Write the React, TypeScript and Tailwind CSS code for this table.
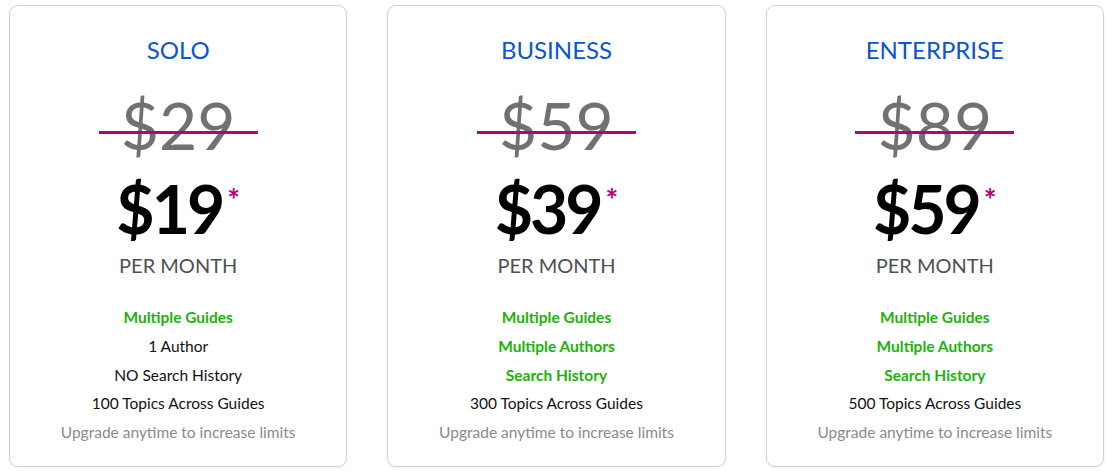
import React from "react";

type Plano = {
  nome: string;
  antigo: string;
  atual: string;
  itens: { texto: string; destaque: boolean }[];
};

const PLANOS: Plano[] = [
  {
    nome: "SOLO",
    antigo: "$29",
    atual: "$19",
    itens: [
      { texto: "Multiple Guides", destaque: true },
      { texto: "1 Author", destaque: false },
      { texto: "NO Search History", destaque: false },
      { texto: "100 Topics Across Guides", destaque: false },
    ],
  },
  {
    nome: "BUSINESS",
    antigo: "$59",
    atual: "$39",
    itens: [
      { texto: "Multiple Guides", destaque: true },
      { texto: "Multiple Authors", destaque: true },
      { texto: "Search History", destaque: true },
      { texto: "300 Topics Across Guides", destaque: false },
    ],
  },
  {
    nome: "ENTERPRISE",
    antigo: "$89",
    atual: "$59",
    itens: [
      { texto: "Multiple Guides", destaque: true },
      { texto: "Multiple Authors", destaque: true },
      { texto: "Search History", destaque: true },
      { texto: "500 Topics Across Guides", destaque: false },
    ],
  },
];

function CartaoPlano({ plano }: { plano: Plano }) {
  return (
    <div className="flex flex-col items-center rounded-[9px] border border-[#d2d2d2] bg-white pt-[28px] pb-[18px] shadow-[0_1px_3px_rgba(0,0,0,0.06)]">
      <h2 className="text-[24px] leading-[32px] text-[#0a55d5]">{plano.nome}</h2>

      <div className="relative mt-[26px] text-[66px] leading-none text-[#717171]">
        {plano.antigo}
        <span className="absolute left-[-22px] right-[-22px] top-[39px] h-[3px] bg-[#b4007c]" />
      </div>

      <div className="mt-[18px] flex items-start text-[66px] font-bold leading-none tracking-[-3px] text-black">
        {plano.atual}
        <span className="ml-[5px] mt-[8px] text-[30px] leading-none tracking-normal text-[#b4007c]">*</span>
      </div>

      <div className="mt-[11px] text-[20px] leading-[24px] text-[#505050]">PER MONTH</div>

      <ul className="mt-[26px] flex flex-col items-center text-[15.5px] leading-[28.75px]">
        {plano.itens.map((item) => (
          <li
            key={item.texto}
            className={item.destaque ? "font-bold text-[#1db20b]" : "text-[#111]"}
          >
            {item.texto}
          </li>
        ))}
        <li className="text-[#8a8a8a]">Upgrade anytime to increase limits</li>
      </ul>
    </div>
  );
}

export default function App() {
  return (
    <div
      className="grid h-[471px] w-[1108px] grid-cols-3 gap-[40px] bg-white pb-[4px] pl-[9px] pr-[4px] pt-[5px]"
      style={{ fontFamily: "Lato, 'Noto Sans', sans-serif" }}
    >
      {PLANOS.map((plano) => (
        <CartaoPlano key={plano.nome} plano={plano} />
      ))}
    </div>
  );
}
